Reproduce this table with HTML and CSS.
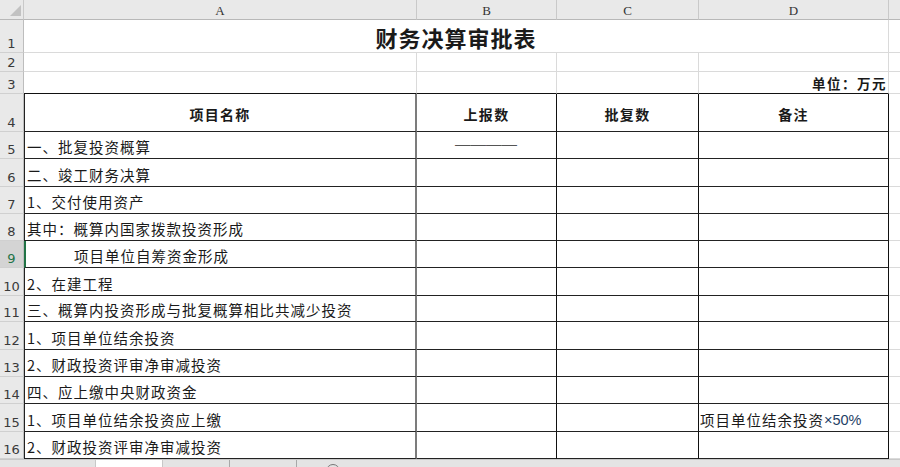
FILE: index.html
```html
<!DOCTYPE html>
<html lang="zh-CN">
<head>
<meta charset="utf-8">
<title>财务决算审批表</title>
<link rel="stylesheet" href="styles.css">
</head>
<body>
<div class="sheet">
  <!-- column headers -->
  <div class="ch corner"><span class="tri"></span></div>
  <div class="ch">A</div>
  <div class="ch">B</div>
  <div class="ch">C</div>
  <div class="ch">D</div>
  <div class="ch ce"></div>

  <!-- row 1 -->
  <div class="rh">1</div>
  <div class="c title">财务决算审批表</div>
  <div class="c e"></div>

  <!-- row 2 -->
  <div class="rh">2</div>
  <div class="c"></div>
  <div class="c"></div>
  <div class="c"></div>
  <div class="c"></div>
  <div class="c e"></div>

  <!-- row 3 -->
  <div class="rh">3</div>
  <div class="c top"></div>
  <div class="c top"></div>
  <div class="c top"></div>
  <div class="c top unit">单位：万元</div>
  <div class="c e"></div>

  <!-- row 4 -->
  <div class="rh">4</div>
  <div class="c t ca head">项目名称</div>
  <div class="c t cb head">上报数</div>
  <div class="c t cb head">批复数</div>
  <div class="c t cb head">备注</div>
  <div class="c e"></div>

  <div class="rh">5</div>
  <div class="c t ca">一、批复投资概算</div>
  <div class="c t cb mid">————</div>
  <div class="c t cb"></div>
  <div class="c t cb"></div>
  <div class="c e"></div>

  <div class="rh">6</div>
  <div class="c t ca">二、竣工财务决算</div>
  <div class="c t cb"></div>
  <div class="c t cb"></div>
  <div class="c t cb"></div>
  <div class="c e"></div>

  <div class="rh">7</div>
  <div class="c t ca">1、交付使用资产</div>
  <div class="c t cb"></div>
  <div class="c t cb"></div>
  <div class="c t cb"></div>
  <div class="c e"></div>

  <div class="rh">8</div>
  <div class="c t ca">其中：概算内国家拨款投资形成</div>
  <div class="c t cb"></div>
  <div class="c t cb"></div>
  <div class="c t cb"></div>
  <div class="c e"></div>

  <div class="rh active">9</div>
  <div class="c t ca sel indent">项目单位自筹资金形成</div>
  <div class="c t cb"></div>
  <div class="c t cb"></div>
  <div class="c t cb"></div>
  <div class="c e"></div>

  <div class="rh">10</div>
  <div class="c t ca">2、在建工程</div>
  <div class="c t cb"></div>
  <div class="c t cb"></div>
  <div class="c t cb"></div>
  <div class="c e"></div>

  <div class="rh">11</div>
  <div class="c t ca">三、概算内投资形成与批复概算相比共减少投资</div>
  <div class="c t cb"></div>
  <div class="c t cb"></div>
  <div class="c t cb"></div>
  <div class="c e"></div>

  <div class="rh">12</div>
  <div class="c t ca">1、项目单位结余投资</div>
  <div class="c t cb"></div>
  <div class="c t cb"></div>
  <div class="c t cb"></div>
  <div class="c e"></div>

  <div class="rh">13</div>
  <div class="c t ca">2、财政投资评审净审减投资</div>
  <div class="c t cb"></div>
  <div class="c t cb"></div>
  <div class="c t cb"></div>
  <div class="c e"></div>

  <div class="rh">14</div>
  <div class="c t ca">四、应上缴中央财政资金</div>
  <div class="c t cb"></div>
  <div class="c t cb"></div>
  <div class="c t cb"></div>
  <div class="c e"></div>

  <div class="rh">15</div>
  <div class="c t ca">1、项目单位结余投资应上缴</div>
  <div class="c t cb"></div>
  <div class="c t cb"></div>
  <div class="c t cb note">项目单位结余投资<span class="lat">×50%</span></div>
  <div class="c e"></div>

  <div class="rh">16</div>
  <div class="c t ca">2、财政投资评审净审减投资</div>
  <div class="c t cb"></div>
  <div class="c t cb"></div>
  <div class="c t cb"></div>
  <div class="c e"></div>

  <!-- sheet tab bar -->
  <div class="tabbar">
    <div class="nav"></div>
    <div class="tab on"></div>
    <div class="tab"></div>
    <div class="tab"></div>
    <div class="add">
      <svg width="16" height="16" viewBox="0 0 16 16"><circle cx="8" cy="8" r="6.5" fill="none" stroke="#777" stroke-width="1"/><path d="M8 4.5v7M4.5 8h7" stroke="#777" stroke-width="1"/></svg>
    </div>
  </div>
</div>
</body>
</html>
```

FILE: styles.css
```css
html, body {
  margin: 0;
  padding: 0;
  width: 900px;
  height: 467px;
  overflow: hidden;
  background: #ffffff;
}

.sheet {
  display: grid;
  grid-template-columns: 24px 393px 140px 142px 190px 1fr;
  grid-template-rows: 20px 33px 19px 22px 38px 27px 28px 27px 27px 27px 28px 26px 28px 27px 27px 28px 27px 1fr;
  width: 900px;
  height: 467px;
  font-family: "Noto Sans CJK SC", "Noto Sans", sans-serif;
  color: #1a1a1a;
}

.sheet > div {
  box-sizing: border-box;
  min-width: 0;
  overflow: hidden;
}

/* column headers */
.ch {
  background: #e9e9e9;
  border-right: 1px solid #c9c9c9;
  border-bottom: 1px solid #b8b8b8;
  font-family: "Liberation Serif", serif;
  font-size: 13px;
  color: #333;
  display: flex;
  align-items: center;
  justify-content: center;
  padding-top: 3px;
}
.ce { border-right: none; }

.corner {
  justify-content: flex-end;
  align-items: flex-end;
  padding: 0 2px 3px 0;
}
.tri {
  width: 11px;
  height: 11px;
  background: #c2c2c2;
  clip-path: polygon(100% 0, 100% 100%, 0 100%);
}

/* row headers */
.rh {
  background: #e9e9e9;
  border-right: 1px solid #bdbdbd;
  border-bottom: 1px solid #d0d0d0;
  font-family: "DejaVu Sans", sans-serif;
  font-size: 13px;
  line-height: 14px;
  color: #3a3a3a;
  display: flex;
  align-items: flex-end;
  justify-content: center;
  padding-bottom: 1px;
}
.rh.active {
  background: #d4d4d4;
  color: #217346;
}

/* cells */
.c {
  border-right: 1px solid #dadada;
  border-bottom: 1px solid #dadada;
  font-size: 14.5px;
  letter-spacing: 1px;
  line-height: 20px;
  white-space: nowrap;
  display: flex;
  align-items: flex-end;
  padding: 0 0 1px 2px;
}
.e { border-right: none; }

.title {
  grid-column: span 4;
  justify-content: center;
  font-size: 22px;
  font-weight: bold;
  letter-spacing: 1px;
  line-height: 28px;
  padding: 0 0 1px 0;
  border-right: 1px solid #dadada;
}

.top { border-bottom: 1px solid #111; }

.unit {
  justify-content: flex-end;
  font-size: 13.5px;
  font-weight: bold;
  letter-spacing: 1.5px;
  line-height: 18px;
  padding: 0 1px 1px 0;
}

.t { border-bottom: 1px solid #222; }
.ca {
  border-left: 1px solid #222;
  border-right: 2px solid #7c7c7c;
}
.cb { border-right: 1px solid #111; }

.head {
  justify-content: center;
  align-items: center;
  font-size: 14px;
  font-weight: bold;
  letter-spacing: 1.3px;
  padding: 3px 0 0 0;
}

.mid {
  justify-content: center;
  align-items: center;
  font-family: "Liberation Sans", sans-serif;
  letter-spacing: 0;
  color: #555;
  font-size: 15.5px;
  padding: 0 1px 3px 0;
}

.sel { border-left: 2px solid #217346; }
.indent { padding-left: 48px; }

.note { padding-left: 1px; }
.lat {
  font-family: "Liberation Sans", sans-serif;
  letter-spacing: 0;
  color: #1f3f66;
}

/* sheet tabs */
.tabbar {
  grid-column: 1 / -1;
  display: flex;
  background: #e4e4e4;
  border-top: 1px solid #c8c8c8;
}
.nav { width: 95px; flex: none; }
.tab {
  width: 66px;
  flex: none;
  border-right: 1px solid #a8a8a8;
}
.tab.on {
  background: #ffffff;
  border-left: 1px solid #c8c8c8;
  border-right: 1px solid #c8c8c8;
}
.add {
  padding: 3px 0 0 28px;
}
.add svg { display: block; }
```
